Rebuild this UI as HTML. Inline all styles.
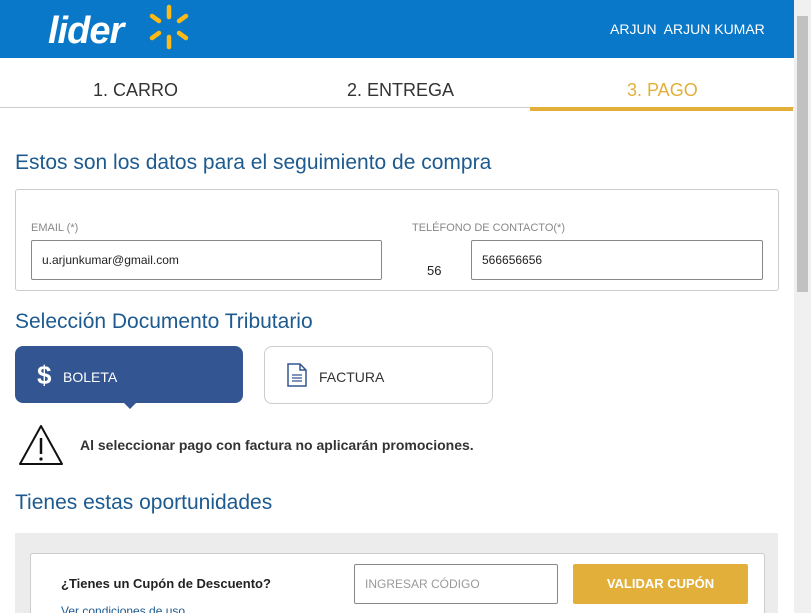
<!DOCTYPE html><html><head><style>
html,body{margin:0;width:811px;height:613px;overflow:hidden}
body{font-family:"Liberation Sans",sans-serif;background:#fff;position:relative}
.a{position:absolute}
.t{color:#1d5a8f;font-size:21px}
.lbl{font-size:11px;color:#888}
.inp{border:1px solid #888;border-radius:2px;box-sizing:border-box;font-size:12px;color:#222;padding:12px 10px}
</style></head><body>
<div class="a" style="left:0;top:0;width:794px;height:58px;background:#0a78c8"></div>
<div class="a" style="left:48px;top:9px;color:#fff;font-size:38px;font-style:italic;font-weight:bold;letter-spacing:-1px;line-height:44px">lider</div>
<svg class="a" style="left:146px;top:4px" width="50" height="50" viewBox="0 0 50 50"><g stroke="#fdb915" stroke-width="4.5" stroke-linecap="round"><line x1="23" y1="3" x2="23" y2="13"/><line x1="23" y1="33" x2="23" y2="43"/><line x1="6" y1="12" x2="13" y2="17"/><line x1="40" y1="12" x2="33" y2="17"/><line x1="6" y1="34" x2="13" y2="29"/><line x1="40" y1="34" x2="33" y2="29"/></g></svg>
<div class="a" style="left:610px;top:21px;color:#fff;font-size:14px">ARJUN&nbsp; ARJUN KUMAR</div>
<div class="a" style="left:794px;top:0;width:17px;height:613px;background:#f0f0f0"></div>
<div class="a" style="left:797px;top:16px;width:11px;height:276px;background:#c1c1c1"></div>
<div class="a" style="left:0;top:107px;width:794px;height:1px;background:#ccc"></div>
<div class="a" style="left:530px;top:107px;width:263px;height:4px;background:#e2b03a"></div>
<div class="a" style="left:93px;top:80px;font-size:18px;color:#333">1. CARRO</div>
<div class="a" style="left:347px;top:80px;font-size:18px;color:#333">2. ENTREGA</div>
<div class="a" style="left:627px;top:80px;font-size:18px;color:#e2b03a">3. PAGO</div>
<div class="a t" style="left:15px;top:151px">Estos son los datos para el seguimiento de compra</div>
<div class="a" style="left:15px;top:189px;width:762px;height:100px;border:1px solid #ccc;border-radius:3px"></div>
<div class="a lbl" style="left:31px;top:222px">EMAIL (*)</div>
<div class="a lbl" style="left:412px;top:222px">TELÉFONO DE CONTACTO(*)</div>
<div class="a inp" style="left:31px;top:240px;width:351px;height:40px">u.arjunkumar@gmail.com</div>
<div class="a" style="left:427px;top:263px;font-size:13px;color:#222">56</div>
<div class="a inp" style="left:471px;top:240px;width:292px;height:40px">566656656</div>
<div class="a t" style="left:15px;top:310px">Selección Documento Tributario</div>
<div class="a" style="left:15px;top:346px;width:228px;height:57px;background:#335693;border-radius:8px"></div>
<div class="a" style="left:123px;top:402px;width:0;height:0;border-left:7px solid transparent;border-right:7px solid transparent;border-top:7px solid #335693"></div>
<div class="a" style="left:37px;top:360px;color:#fff;font-size:26px;font-weight:bold">$</div>
<div class="a" style="left:63px;top:369px;color:#fff;font-size:14px">BOLETA</div>
<div class="a" style="left:264px;top:346px;width:227px;height:56px;border:1px solid #ccc;border-radius:8px"></div>
<svg class="a" style="left:287px;top:363px" width="21" height="24" viewBox="0 0 21 24"><path d="M1 1H13L19 7V23H1Z M13 1V7H19" fill="none" stroke="#335693" stroke-width="1.5"/><path d="M5 12H15M5 15H15M5 18H15" stroke="#335693" stroke-width="1.3"/></svg>
<div class="a" style="left:319px;top:369px;color:#333;font-size:14px">FACTURA</div>
<svg class="a" style="left:18px;top:424px" width="46" height="42" viewBox="0 0 46 42"><path d="M23 2L44 40H2Z" fill="none" stroke="#111" stroke-width="2" stroke-linejoin="round"/><line x1="23" y1="14" x2="23" y2="30" stroke="#111" stroke-width="2.5"/><circle cx="23" cy="35" r="1.6" fill="#111"/></svg>
<div class="a" style="left:80px;top:437px;font-size:14px;font-weight:bold;color:#333">Al seleccionar pago con factura no aplicarán promociones.</div>
<div class="a t" style="left:15px;top:491px">Tienes estas oportunidades</div>
<div class="a" style="left:15px;top:533px;width:763px;height:80px;background:#ececec"></div>
<div class="a" style="left:30px;top:553px;width:733px;height:60px;background:#fff;border:1px solid #ccc;border-bottom:none;border-radius:3px 3px 0 0"></div>
<div class="a" style="left:61px;top:576px;font-size:13px;font-weight:bold;color:#222">¿Tienes un Cupón de Descuento?</div>
<div class="a" style="left:61px;top:604px;font-size:12px;color:#1d5a8f">Ver condiciones de uso</div>
<div class="a inp" style="left:354px;top:564px;width:204px;height:40px;color:#999;font-size:12px">INGRESAR CÓDIGO</div>
<div class="a" style="left:573px;top:564px;width:175px;height:40px;background:#e2b03a;border-radius:2px;color:#fff;font-weight:bold;font-size:13px;text-align:center;line-height:40px">VALIDAR CUPÓN</div>
</body></html>
